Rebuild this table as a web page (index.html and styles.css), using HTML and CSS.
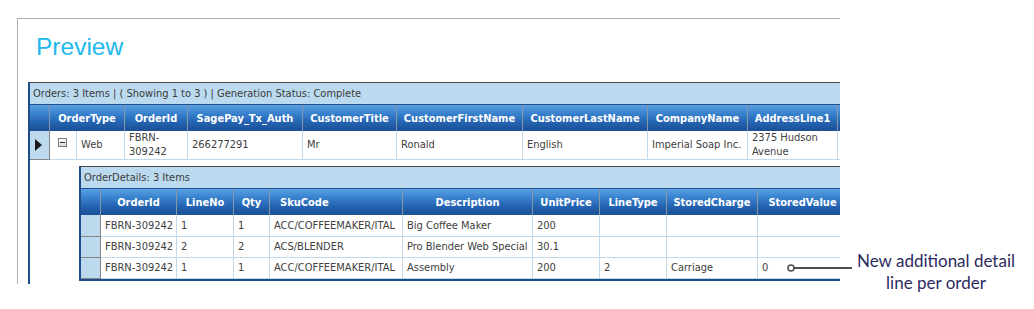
FILE: index.html
```html
<!DOCTYPE html>
<html>
<head>
<meta charset="utf-8">
<link rel="stylesheet" href="styles.css">
</head>
<body>
<div class="page">
  <div class="frame">
    <h1 class="title">Preview</h1>
    <div class="grid">
      <div class="bar">Orders: 3 Items | ( Showing 1 to 3 ) | Generation Status: Complete</div>
      <div class="rows master-cols">
        <div class="hd"></div>
        <div class="hd span2">OrderType</div>
        <div class="hd">OrderId</div>
        <div class="hd">SagePay_Tx_Auth</div>
        <div class="hd">CustomerTitle</div>
        <div class="hd">CustomerFirstName</div>
        <div class="hd">CustomerLastName</div>
        <div class="hd">CompanyName</div>
        <div class="hd">AddressLine1</div>
        <div class="hd"></div>

        <div class="cell sel"><span class="tri"></span></div>
        <div class="cell exp"><span class="expander"></span></div>
        <div class="cell">Web</div>
        <div class="cell">FBRN-309242</div>
        <div class="cell">266277291</div>
        <div class="cell">Mr</div>
        <div class="cell">Ronald</div>
        <div class="cell">English</div>
        <div class="cell">Imperial Soap Inc.</div>
        <div class="cell">2375 Hudson Avenue</div>
        <div class="cell"></div>

        <div class="detail">
          <div class="grid sub">
            <div class="bar">OrderDetails: 3 Items</div>
            <div class="rows detail-cols">
              <div class="hd"></div>
              <div class="hd">OrderId</div>
              <div class="hd">LineNo</div>
              <div class="hd">Qty</div>
              <div class="hd left">SkuCode</div>
              <div class="hd">Description</div>
              <div class="hd">UnitPrice</div>
              <div class="hd">LineType</div>
              <div class="hd">StoredCharge</div>
              <div class="hd">StoredValue</div>

              <div class="cell sel"></div>
              <div class="cell">FBRN-309242</div>
              <div class="cell">1</div>
              <div class="cell">1</div>
              <div class="cell">ACC/COFFEEMAKER/ITAL</div>
              <div class="cell">Big Coffee Maker</div>
              <div class="cell">200</div>
              <div class="cell"></div>
              <div class="cell"></div>
              <div class="cell"></div>

              <div class="cell sel"></div>
              <div class="cell">FBRN-309242</div>
              <div class="cell">2</div>
              <div class="cell">2</div>
              <div class="cell">ACS/BLENDER</div>
              <div class="cell">Pro Blender Web Special</div>
              <div class="cell">30.1</div>
              <div class="cell"></div>
              <div class="cell"></div>
              <div class="cell"></div>

              <div class="cell sel"></div>
              <div class="cell">FBRN-309242</div>
              <div class="cell">1</div>
              <div class="cell">1</div>
              <div class="cell">ACC/COFFEEMAKER/ITAL</div>
              <div class="cell">Assembly</div>
              <div class="cell">200</div>
              <div class="cell">2</div>
              <div class="cell">Carriage</div>
              <div class="cell">0</div>
            </div>
          </div>
        </div>
      </div>
    </div>
  </div>

  <svg class="pointer" width="68" height="8" viewBox="0 0 68 8">
    <line x1="8" y1="4" x2="66" y2="4" stroke="#505050" stroke-width="2"/>
    <circle cx="5" cy="4" r="3" fill="#fff" stroke="#505050" stroke-width="1.6"/>
  </svg>
  <div class="note">New additional detail<br>line per order</div>
</div>
</body>
</html>
```

FILE: styles.css
```css
* { box-sizing: border-box; }

body {
  margin: 0;
  background: #ffffff;
}

.page {
  position: relative;
  width: 1034px;
  height: 309px;
  padding-top: 18px;
}

.frame {
  margin-left: 17px;
  width: 823px;
  height: 266px;
  border-top: 1px solid #b2b2b2;
  border-left: 1px solid #b2b2b2;
  padding-left: 10px;
  overflow: hidden;
}

.title {
  margin: 14px 0 21px 0;
  padding-left: 8px;
  font-family: "Liberation Sans", Arial, sans-serif;
  font-weight: normal;
  font-size: 24.5px;
  line-height: 28px;
  color: #1db8ee;
}

.grid {
  width: max-content;
  border-left: 2px solid #1d4e8a;
  border-top: 1px solid #4a4a4a;
  font-family: "DejaVu Sans Condensed", "DejaVu Sans", sans-serif;
  font-stretch: semi-condensed;
  font-size: 11px;
  color: #404040;
}

.bar {
  height: 22px;
  line-height: 21px;
  padding-left: 3px;
  background: #bcdaef;
  border-bottom: 1px solid #1e4f8c;
  color: #3a3a3a;
  white-space: nowrap;
}

.rows {
  display: grid;
}

.master-cols {
  grid-template-columns: 20px 27px 48px 63px 115px 94px 126px 125px 100px 90px 120px;
  grid-template-rows: 26px 29px auto;
}

.detail-cols {
  grid-template-columns: 20px 76px 57px 36px 133px 130px 67px 67px 91px 90px;
  grid-template-rows: 26px 22px 21px 21px;
}

.hd {
  display: flex;
  align-items: center;
  justify-content: center;
  background: linear-gradient(#5aa2e3 0%, #3b84d0 30%, #2565b3 65%, #1a4f95 100%);
  border-right: 1px solid #8797a8;
  color: #ffffff;
  font-weight: bold;
  white-space: nowrap;
  overflow: hidden;
}

.hd.span2 { grid-column: span 2; }
.hd.left { justify-content: flex-start; padding-left: 10px; }

.cell {
  display: flex;
  align-items: center;
  padding: 0 4px;
  line-height: 14px;
  border-right: 1px solid #c2d9ec;
  border-bottom: 1px solid #c2d9ec;
  background: #ffffff;
  white-space: normal;
  overflow: hidden;
}

.detail-cols .cell { white-space: nowrap; }

.cell.sel {
  background: #bcd9ee;
  border-right: 1px solid #858585;
  border-bottom: 1px solid #858585;
  justify-content: center;
  padding: 0;
}

.cell.exp {
  justify-content: center;
  padding: 0;
}

.tri {
  width: 0;
  height: 0;
  margin-left: -3px;
  border-top: 6px solid transparent;
  border-bottom: 6px solid transparent;
  border-left: 7px solid #1a1a1a;
}

.expander {
  position: relative;
  width: 9px;
  height: 9px;
  margin: -6px 0 0 -1px;
  border: 1px solid #7a7a7a;
  background: linear-gradient(#ffffff, #d8d8d8);
}

.expander::after {
  content: "";
  position: absolute;
  left: 1px;
  top: 3px;
  width: 5px;
  height: 1px;
  background: #333;
}

.detail {
  grid-column: 1 / -1;
  padding: 6px 0 4px 49px;
  background: #ffffff;
}

.grid.sub {
  border-bottom: 2px solid #1d4e8a;
}

.pointer {
  position: absolute;
  left: 786px;
  top: 264px;
}

.note {
  position: absolute;
  left: 846px;
  top: 250px;
  width: 180px;
  text-align: center;
  font-family: Lato, "Open Sans", sans-serif;
  font-size: 17px;
  line-height: 22px;
  color: #2b2b5e;
}
```
